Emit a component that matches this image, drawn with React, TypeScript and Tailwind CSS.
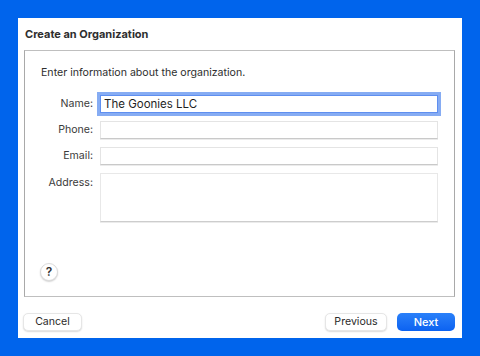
import React from 'react';

const fieldBase =
  'h-[18px] w-full bg-white border border-[#e4e4e4] border-b-[#c9c9c9] shadow-[0_0.5px_0.5px_rgba(0,0,0,0.08)] px-[4px] text-[11.5px] leading-[16px] text-[#1f1f1f]';

const Row: React.FC<{ label: string; children: React.ReactNode; tall?: boolean }> = ({ label, children, tall }) => (
  <div className="flex items-start">
    <div className={`w-[68px] text-right text-[10.6px] text-[#3b3b3b] ${tall ? 'pt-[2px]' : 'leading-[18px]'}`}>{label}</div>
    <div className="ml-[7px] flex-1">{children}</div>
  </div>
);

const Button: React.FC<{ label: string; w: string; primary?: boolean }> = ({ label, w, primary }) =>
  primary ? (
    <div className={`${w} h-[18px] rounded-[5px] bg-gradient-to-b from-[#2a80f9] to-[#0b62f1] flex items-center justify-center text-[11px] font-medium text-white`}>
      {label}
    </div>
  ) : (
    <div className={`${w} h-[18px] rounded-[5px] bg-white border border-[#e6e6e6] shadow-[0_1px_1.5px_rgba(0,0,0,0.15)] flex items-center justify-center text-[10.6px] text-[#2b2b2b]`}>
      {label}
    </div>
  );

export default function App() {
  return (
    <div
      className="w-[480px] h-[356px] bg-[#0064ec] pt-[18px] pl-[18px]"
      style={{ fontFamily: 'Inter, "Liberation Sans", sans-serif' }}
    >
      <div className="w-[444px] h-[320px] bg-white flex flex-col">
        <div className="h-[32px] flex items-center pl-[7px] text-[11px] font-bold text-[#2e2e2e]">
          Create an Organization
        </div>
        <div className="ml-[6px] w-[431px] h-[247px] border border-[#bfbfbf] border-l-[#a9a9a9] border-r-[#a9a9a9] flex flex-col">
          <div className="pl-[16px] pt-[15px] text-[10.6px] text-[#2e2e2e] leading-[14px]">
            Enter information about the organization.
          </div>
          <div className="mt-[15px] pr-[16px] flex flex-col gap-[8px]">
            <Row label="Name:">
              <div className="h-[18px] w-full bg-white outline outline-[3px] outline-[#86acf3] border border-[#5f8ff0] px-[3px] text-[11.5px] leading-[16px] text-[#1f1f1f]">
                The Goonies LLC
              </div>
            </Row>
            <Row label="Phone:">
              <div className={fieldBase}></div>
            </Row>
            <Row label="Email:">
              <div className={fieldBase}></div>
            </Row>
            <Row label="Address:" tall>
              <div className="h-[49px] w-full bg-white border border-[#e8e8e8] border-b-[#cdcdcd] shadow-[0_0.5px_0.5px_rgba(0,0,0,0.08)]"></div>
            </Row>
          </div>
          <div className="mt-auto mb-[15px] ml-[15px] w-[18px] h-[18px] rounded-full bg-white border border-[#dcdcdc] shadow-[0_1px_1.5px_rgba(0,0,0,0.18)] flex items-center justify-center text-[12px] font-semibold text-[#333]">
            ?
          </div>
        </div>
        <div className="mt-[16px] flex items-center pl-[5px] pr-[7px]">
          <Button label="Cancel" w="w-[59px]" />
          <div className="flex-1" />
          <Button label="Previous" w="w-[62px]" />
          <div className="w-[10px]" />
          <Button label="Next" w="w-[58px]" primary />
        </div>
      </div>
    </div>
  );
}
